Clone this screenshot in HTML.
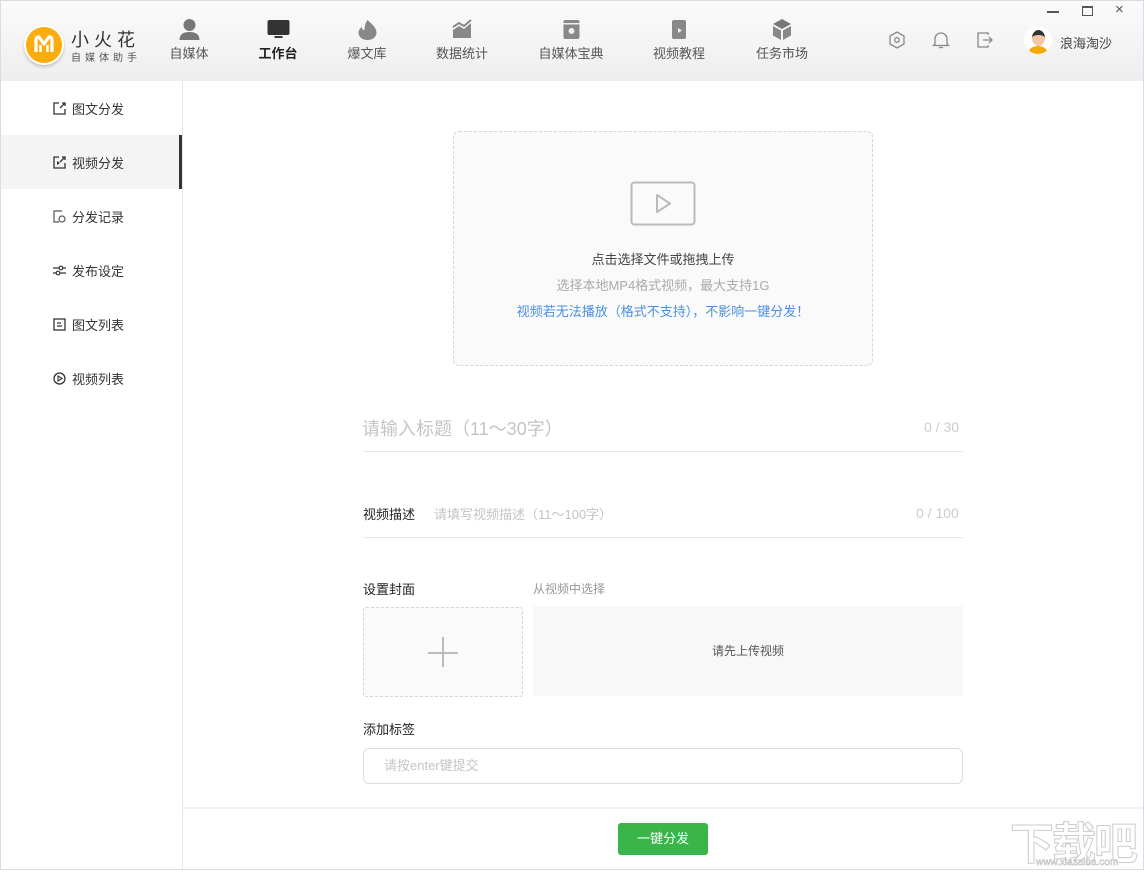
<!DOCTYPE html>
<html><head><meta charset="utf-8"><style>
*{margin:0;padding:0;box-sizing:border-box}
body{width:1144px;height:870px;overflow:hidden;background:#fff;font-family:"Liberation Sans","Noto Sans CJK SC",sans-serif;position:relative}
.abs{position:absolute}
.hdr{left:0;top:0;width:1144px;height:81px;background:linear-gradient(#fbfbfb,#eeeeee)}
.nav{position:absolute;top:18px;text-align:center;font-size:13px;color:#555;transform:translateX(-50%);white-space:nowrap}
.nav svg{display:block;margin:0 auto 1px}
.side{left:0;top:81px;width:183px;height:789px;border-right:1px solid #e6e6e6;background:#fff}
.si{position:absolute;left:0;width:182px;height:54px;font-size:13px;color:#333;display:flex;align-items:center;padding-left:53px}
.si svg{margin-right:6px}
</style></head><body>
<div class="abs hdr">
 <div class="abs" style="left:24px;top:25px;width:40px;height:40px;border-radius:50%;background:#fbad0e;box-shadow:0 2px 3px rgba(0,0,0,.2);border:2px solid #fff"></div>
 <svg class="abs" style="left:33px;top:34px" width="22" height="22" viewBox="0 0 22 22"><path d="M3 18V6q0-3 3-3l5 7 5-7q3 0 3 3v12" fill="none" stroke="#fff" stroke-width="3.2" stroke-linejoin="round"/><path d="M7.5 11v7M14.5 11v7" stroke="#fff" stroke-width="2.5"/></svg>
 <div class="abs" style="left:71px;top:26px;font-size:18px;color:#333;letter-spacing:5px">小火花</div>
 <div class="abs" style="left:71px;top:49px;font-size:10px;color:#555;letter-spacing:4px">自媒体助手</div>
 <div class="nav" style="left:189px"><svg width="20" height="24" viewBox="0 0 20 24"><circle cx="10" cy="7" r="6" fill="#777"/><path d="M0 22c0-6 4-8 10-8s10 2 10 8z" fill="#777"/></svg>自媒体</div>
 <div class="nav" style="left:278px;color:#222;font-weight:bold"><svg width="22" height="24" viewBox="0 0 22 24"><rect x="0" y="2" width="22" height="15" rx="2" fill="#333"/><rect x="7" y="18" width="8" height="2" fill="#333"/></svg>工作台</div>
 <div class="nav" style="left:367px"><svg width="20" height="24" viewBox="0 0 20 24"><path d="M10 2c4 4 9 7 9 13a9 7 0 0 1-18 0c0-3 2-5 3-6 1 3 2 3 3 3 0-4 1-7 3-10z" fill="#888"/></svg>爆文库</div>
 <div class="nav" style="left:462px"><svg width="20" height="24" viewBox="0 0 20 24"><path d="M1 20V12l6-4 5 3 7-6v15z" fill="#888"/><path d="M1 9l6-4 5 3 7-6" stroke="#888" stroke-width="2" fill="none"/></svg>数据统计</div>
 <div class="nav" style="left:571px"><svg width="20" height="24" viewBox="0 0 20 24"><rect x="2" y="2" width="16" height="19" rx="2" fill="#888"/><rect x="2" y="5" width="16" height="1.5" fill="#eee"/><circle cx="10" cy="13" r="3" fill="#eee"/></svg>自媒体宝典</div>
 <div class="nav" style="left:679px"><svg width="20" height="24" viewBox="0 0 20 24"><rect x="3" y="2" width="14" height="19" rx="2" fill="#888"/><path d="M9 10v5l4-2.5z" fill="#eee"/></svg>视频教程</div>
 <div class="nav" style="left:782px"><svg width="20" height="24" viewBox="0 0 20 24"><path d="M10 1l9 5-9 5-9-5z" fill="#777"/><path d="M1 8l8 4.5V22l-8-4.5zM11 12.5L19 8v9.5L11 22z" fill="#888"/></svg>任务市场</div>
 <svg class="abs" style="left:888px;top:31px" width="18" height="18" viewBox="0 0 18 18"><path d="M9 1l7 4v8l-7 4-7-4V5z" fill="none" stroke="#888" stroke-width="1.3"/><circle cx="9" cy="9" r="2.3" fill="none" stroke="#888" stroke-width="1.3"/></svg>
 <svg class="abs" style="left:932px;top:30px" width="18" height="20" viewBox="0 0 18 20"><path d="M3 14V9a6 6 0 0 1 12 0v5l1.5 1.5h-15z" fill="none" stroke="#888" stroke-width="1.3"/><path d="M7 17.5h4" stroke="#888" stroke-width="1.3"/></svg>
 <svg class="abs" style="left:976px;top:31px" width="18" height="18" viewBox="0 0 18 18"><path d="M12 4V2H2v14h10v-2" fill="none" stroke="#888" stroke-width="1.3"/><path d="M7 9h9M13 6l3 3-3 3" fill="none" stroke="#888" stroke-width="1.3"/></svg>
 <div class="abs" style="left:1024px;top:26px;width:28px;height:28px;border-radius:50%;background:#fff;overflow:hidden"><div class="abs" style="left:5px;top:20px;width:18px;height:12px;border-radius:50%;background:#f5a800"></div><div class="abs" style="left:8px;top:4px;width:13px;height:16px;border-radius:50%;background:#f1c7a4;border-top:5px solid #333"></div></div>
 <div class="abs" style="left:1060px;top:33px;font-size:13px;color:#444">浪海淘沙</div>
 <div class="abs" style="left:1047px;top:11px;width:12px;height:1.5px;background:#555"></div>
 <div class="abs" style="left:1082px;top:6px;width:11px;height:10px;border:1.5px solid #555;border-top-width:2.5px"></div>
 <div class="abs" style="left:1115px;top:1px;font-size:15px;color:#555">×</div>
</div>
<div class="abs side">
 <div class="si" style="top:0"><svg width="13" height="13" viewBox="0 0 13 13"><path d="M6 1H1v11h11V7" fill="none" stroke="#333" stroke-width="1.3"/><path d="M7 6l5-5M9 1h3v3" fill="none" stroke="#333" stroke-width="1.3"/></svg>图文分发</div>
 <div class="si" style="top:54px;background:#f4f4f4;border-right:3px solid #333"><svg width="13" height="13" viewBox="0 0 13 13"><path d="M6 1H1v11h11V7" fill="none" stroke="#333" stroke-width="1.3"/><path d="M7 6l5-5M9 1h3v3" fill="none" stroke="#333" stroke-width="1.3"/><path d="M4 5v4l3-2z" fill="#333"/></svg>视频分发</div>
 <div class="si" style="top:108px"><svg width="13" height="13" viewBox="0 0 13 13"><path d="M9 1H1v11h5" fill="none" stroke="#555" stroke-width="1.2"/><circle cx="9" cy="9" r="3" fill="none" stroke="#555" stroke-width="1.2"/></svg>分发记录</div>
 <div class="si" style="top:162px"><svg width="13" height="13" viewBox="0 0 13 13"><path d="M0 4h13M0 9h13" stroke="#333" stroke-width="1.2"/><circle cx="8" cy="4" r="1.8" fill="#fff" stroke="#333" stroke-width="1.2"/><circle cx="5" cy="9" r="1.8" fill="#fff" stroke="#333" stroke-width="1.2"/></svg>发布设定</div>
 <div class="si" style="top:216px"><svg width="13" height="13" viewBox="0 0 13 13"><rect x="1" y="1" width="11" height="11" fill="none" stroke="#333" stroke-width="1.3"/><path d="M4 5h4M4 8h5" stroke="#333" stroke-width="1.2"/></svg>图文列表</div>
 <div class="si" style="top:270px"><svg width="13" height="13" viewBox="0 0 13 13"><circle cx="6.5" cy="6.5" r="5.5" fill="none" stroke="#333" stroke-width="1.3"/><path d="M5 4v5l4-2.5z" fill="none" stroke="#333" stroke-width="1.1"/></svg>视频列表</div>
</div>
<div class="abs" style="left:453px;top:131px;width:420px;height:235px;border:1px dashed #d6d6d6;border-radius:6px;background:#fafafa"></div>
<svg class="abs" style="left:630px;top:181px" width="66" height="45" viewBox="0 0 66 45"><rect x="1.5" y="1.5" width="63" height="42" rx="3" fill="none" stroke="#bbb" stroke-width="2"/><path d="M27 14v17l13-8.5z" fill="none" stroke="#bbb" stroke-width="2" stroke-linejoin="round"/></svg>
<div class="abs" style="left:453px;top:249px;width:420px;text-align:center;font-size:13px;color:#444">点击选择文件或拖拽上传</div>
<div class="abs" style="left:453px;top:275px;width:420px;text-align:center;font-size:13px;color:#aaa">选择本地MP4格式视频，最大支持1G</div>
<div class="abs" style="left:453px;top:301px;width:420px;text-align:center;font-size:13px;color:#4a90e2">视频若无法播放（格式不支持），不影响一键分发！</div>
<div class="abs" style="left:362px;top:415px;font-size:18px;color:#c4c4c4">请输入标题（11～30字）</div>
<div class="abs" style="left:924px;top:419px;font-size:14px;color:#ccc">0 / 30</div>
<div class="abs" style="left:363px;top:451px;width:600px;height:1px;background:#e8e8e8"></div>
<div class="abs" style="left:363px;top:504px;font-size:13px;color:#222">视频描述</div>
<div class="abs" style="left:434px;top:504px;font-size:13px;color:#c4c4c4">请填写视频描述（11～100字）</div>
<div class="abs" style="left:916px;top:505px;font-size:14px;color:#ccc">0 / 100</div>
<div class="abs" style="left:363px;top:537px;width:600px;height:1px;background:#e8e8e8"></div>
<div class="abs" style="left:363px;top:579px;font-size:13px;color:#222">设置封面</div>
<div class="abs" style="left:533px;top:580px;font-size:12px;color:#999">从视频中选择</div>
<div class="abs" style="left:363px;top:607px;width:160px;height:90px;border:1px dashed #d6d6d6;border-radius:3px;background:#fafafa"></div>
<div class="abs" style="left:428px;top:652px;width:30px;height:1.5px;background:#bbb"></div>
<div class="abs" style="left:442px;top:637px;width:1.5px;height:30px;background:#bbb"></div>
<div class="abs" style="left:533px;top:606px;width:430px;height:90px;background:#f8f8f8;text-align:center;line-height:90px;font-size:12px;color:#555">请先上传视频</div>
<div class="abs" style="left:363px;top:719px;font-size:13px;color:#222">添加标签</div>
<div class="abs" style="left:363px;top:748px;width:600px;height:36px;border:1px solid #ddd;border-radius:6px;padding-left:20px;line-height:34px;font-size:13px;color:#c4c4c4">请按enter键提交</div>
<div class="abs" style="left:183px;top:807px;width:961px;height:2px;background:#f0f0f0"></div>
<div class="abs" style="left:618px;top:823px;width:90px;height:32px;background:#3ab54a;border-radius:3px;color:#fff;font-size:13px;text-align:center;line-height:32px">一键分发</div>
<div class="abs" style="left:1010px;top:808px;font-size:44px;color:#fff;-webkit-text-stroke:1px #ccc;font-weight:bold;letter-spacing:-2px">下载吧</div>
<div class="abs" style="left:1036px;top:857px;font-size:10px;color:#fff;-webkit-text-stroke:.5px #bbb">www.xiazaiba.com</div>
<div class="abs" style="left:0;top:0;width:1144px;height:870px;border:1px solid #d8dde3;pointer-events:none"></div>
</body></html>
